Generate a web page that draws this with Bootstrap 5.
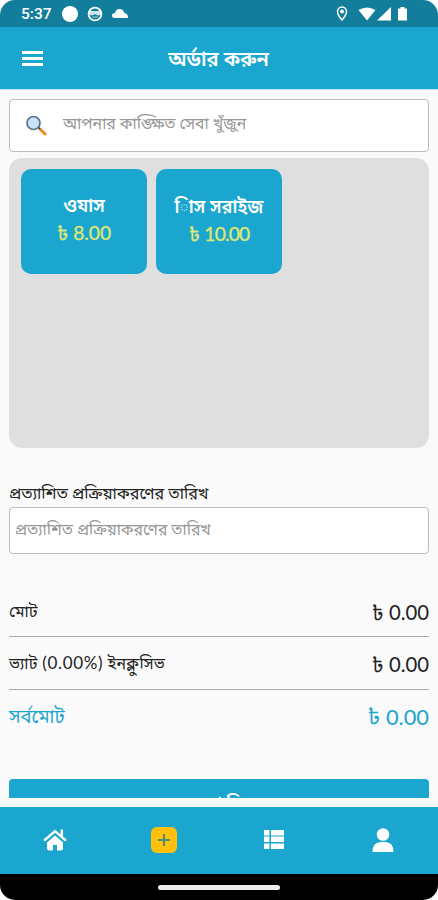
<!DOCTYPE html>
<html lang="bn">
<head>
<meta charset="utf-8">
<meta name="viewport" content="width=device-width, initial-scale=1">
<title>অর্ডার করুন</title>
<link href="https://cdn.jsdelivr.net/npm/bootstrap@5.3.0/dist/css/bootstrap.min.css" rel="stylesheet">
<style>
:root{--brand:#1aa6cf}
body{font-family:Lato,"Noto Sans Bengali","Noto Sans",sans-serif;background:#fff;line-height:1.2}
svg{display:block;flex:none}
.phone{width:438px;height:900px;border-radius:15px;background:#fafafa}
.statusbar{height:27px;background:#137e9b;padding:1px 30px 0 21px;font:500 15.5px Roboto,sans-serif}
.appbar{height:63px;background:var(--brand);border-bottom:1px solid #bfe6f5;padding:0 22px}
.app-title{font-size:20.2px;font-weight:600;padding-right:22px}
.scroll-body{height:708px;padding:9px 9px 0}
.search-box{height:53px;border:1.5px solid #bcbcbc;border-radius:4px;padding-left:16px;color:#979797;font-size:15.8px}
.search-box .txt{padding-bottom:4px}
.services{height:290px;margin-top:6px;border-radius:13px;background:#dfdfdf;padding:11px 12px;gap:9px}
.service{width:126px;height:105px;border-radius:10px;background:var(--brand);color:#fff;line-height:27px;padding-bottom:6px}
.service:nth-child(2){padding-bottom:3px}
.service-name{font-size:18.2px;font-weight:600}
.price{font-size:19.2px;color:#dce775;-webkit-text-stroke:.35px #dce775}
.service:nth-child(2) .price{letter-spacing:-.8px;word-spacing:1px}
.date-label{margin-top:35px;height:24px;font-size:16.1px;line-height:19px;color:#222}
.date-box{height:47px;border:1px solid #bcbcbc;border-radius:4px;padding:0 0 2px 5px;font-size:15.8px;color:#979797}
.totals{margin-top:31px}
.total-row{height:53px;padding-top:1px;font-size:16px;color:#222}
.total-row:first-child{height:51px}
.total-row + .total-row{border-top:1.5px solid #a9a9a9}
.amount{font-size:20.3px;padding-top:2px}
.vat{font-size:15.8px;letter-spacing:.3px}
.vat-rate{font-size:17px;letter-spacing:.7px}
.grand{color:var(--brand)!important;font-size:18.500px}
.grand .amount{font-size:21.8px}
.submit-wrap{height:19px;margin-top:37px}
.submit-btn{height:48px;background:var(--brand);color:#fff;border:0;border-radius:4px;font-size:17.5px;font-weight:600;padding:0 0 2px 5px}
.tabbar{height:67px;margin-top:9px;background:var(--brand);padding-bottom:2px}
.tab-item{width:109.5px}
.gesture{height:26px;background:#000}
.pill{width:122px;height:5px;border-radius:3px;background:#eee}
.txt{white-space:nowrap}
</style>
</head>
<body>
<main class="phone overflow-hidden d-flex flex-column">
 <div class="statusbar d-flex align-items-center text-white">
  <span>5:37</span>
  <svg class="ms-1" width="76" height="20" viewBox="0 0 76 20" fill="#fff"><circle cx="14" cy="10" r="8"/><circle cx="39" cy="10" r="6.400" fill="none" stroke="#fff" stroke-width="1.800"/><path d="M33 5.500l3 1.500h6l3-1.500v4.500q-2.500 2.500-5 .5h-2q-2.500 2-5-.5z" opacity=".8"/><path d="M36 13h6" stroke="#fff" opacity=".6"/><path d="M59 14q-3 0-3-2.500T59 9q1-4 4.500-4t5 4q3.500.5 3.500 5z"/></svg>
  <svg class="ms-auto" width="72" height="20" viewBox="0 0 72 20" fill="#fff"><path d="M6 16Q1.500 11 1.500 7.500a4.500 4.500 0 0 1 9 0Q10.500 11 6 16z" fill="none" stroke="#fff" stroke-width="1.500"/><circle cx="6" cy="7.500" r="2"/><path d="M22.500 6q8.500-5 17 0l-8.500 10.500zM41 16.500L55 3v13.500zM62 4.500h2.500V3h4v1.500H71v12h-9z"/></svg>
 </div>
 <header class="appbar d-flex align-items-center text-white">
  <svg width="21" height="15" viewBox="0 0 21 15" fill="#fff"><path d="M0 0h21v3H0zM0 6h21v3H0zM0 12h21v3H0z"/></svg>
  <div class="app-title txt flex-grow-1 text-center">অর্ডার করুন</div>
 </header>
 <section class="scroll-body overflow-hidden flex-shrink-0">
  <div class="search-box bg-white d-flex align-items-center">
   <svg width="21" height="21" viewBox="0 0 21 21"><path d="M12.500 12.500l3 3" stroke="#444" stroke-width="2"/><path d="M15 15l4 4" stroke="#f28a22" stroke-width="3" stroke-linecap="round"/><circle cx="7.500" cy="8" r="6.500" fill="#c9e3fb" stroke="#59748b" stroke-width="1.700"/></svg>
   <span class="txt ps-3">আপনার কাঙ্ক্ষিত সেবা খুঁজুন</span>
  </div>
  <div class="services d-flex align-items-start">
   <div class="service d-flex flex-column align-items-center justify-content-center"><span class="service-name txt">ওযাস</span><span class="price">৳ 8.00</span></div>
   <div class="service d-flex flex-column align-items-center justify-content-center"><span class="service-name txt">িাস সরাইজ</span><span class="price">৳ 10.00</span></div>
  </div>
  <div class="date-label"><span class="txt">প্রত্যাশিত প্রক্রিয়াকরণের তারিখ</span></div>
  <div class="date-box bg-white d-flex align-items-center"><span class="txt">প্রত্যাশিত প্রক্রিয়াকরণের তারিখ</span></div>
  <div class="totals">
   <div class="total-row d-flex align-items-center justify-content-between"><span class="txt">মোট</span><span class="amount">৳ 0.00</span></div>
   <div class="total-row d-flex align-items-center justify-content-between"><span class="txt vat">ভ্যাট <span class="vat-rate">(0.00%)</span> ইনক্লুসিভ</span><span class="amount">৳ 0.00</span></div>
   <div class="total-row grand d-flex align-items-center justify-content-between"><span class="txt">সর্বমোট</span><span class="amount">৳ 0.00</span></div>
  </div>
  <div class="submit-wrap overflow-hidden"><button class="submit-btn w-100">জমা দিন</button></div>
 </section>
 <nav class="tabbar d-flex align-items-center flex-shrink-0">
  <div class="tab-item d-flex justify-content-center"><svg width="24" height="24" viewBox="0 0 24 24" fill="#fff"><path d="M12 7.500l8 7V20a2.500 2.500 0 0 1-2.500 2.500H14V17h-4v5.500H6.500A2.500 2.500 0 0 1 4 20v-5.500z"/><path d="M1.800 12L12 3.200 22.200 12M18.800 2.500V8" fill="none" stroke="#fff" stroke-width="2.400" stroke-linejoin="round" stroke-linecap="round"/><path d="M3.500 13.500L12 6l8.500 7.500" fill="none" stroke="#1aa6cf" stroke-width=".8"/></svg></div>
  <div class="tab-item d-flex justify-content-center"><svg width="26" height="26" viewBox="0 0 26 26"><rect width="26" height="26" rx="6" fill="#ffc10a"/><path d="M13 7v12M7 13h12" stroke="#4a9278" stroke-width="2"/></svg></div>
  <div class="tab-item d-flex justify-content-center"><svg width="20" height="19" viewBox="0 0 20 19" fill="#fff"><path d="M0 0h5.500v5.500H0zM7 0h13v5.500H7zM0 6.500h5.500V12H0zM7 6.500h13V12H7zM0 13.500h5.500V19H0zM7 13.500h13V19H7z"/></svg></div>
  <div class="tab-item d-flex justify-content-center"><svg width="22" height="24" viewBox="0 0 22 24" fill="#fff"><circle cx="11" cy="6.500" r="6.300"/><path d="M.5 24Q.5 14 9 14h4q8.500 0 8.500 10z"/></svg></div>
 </nav>
 <footer class="gesture d-flex justify-content-center align-items-center flex-shrink-0"><div class="pill"></div></footer>
</main>
<script src="https://cdn.jsdelivr.net/npm/bootstrap@5.3.0/dist/js/bootstrap.bundle.min.js"></script>
</body>
</html>
